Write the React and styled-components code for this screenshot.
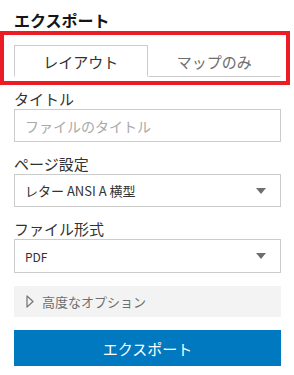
import React, { useState } from 'react';
import styled, { createGlobalStyle } from 'styled-components';

const GlobalStyle = createGlobalStyle`
  html, body {
    margin: 0;
    padding: 0;
    background: #fff;
  }
  body {
    font-family: "Noto Sans CJK JP", "Noto Sans", sans-serif;
    color: #323232;
  }
`;

const Panel = styled.div`
  width: 294px;
  height: 375px;
  box-sizing: border-box;
  padding: 10px 13px 0 14px;
  overflow: hidden;
`;

const Heading = styled.h2`
  margin: 0;
  font-size: 16px;
  line-height: 21px;
  font-weight: 700;
  color: #151515;
`;

const Highlight = styled.div`
  margin: 0 -9px 0 -14px;
  border: 4px solid #ec1c24;
  padding: 10px 5px 4px 10px;
`;

const TabList = styled.div`
  display: flex;
`;

const Tab = styled.button`
  flex: 1;
  height: 32px;
  margin: 0;
  padding: 0;
  background: #fff;
  font-family: inherit;
  font-size: 15px;
  color: ${(p) => (p.$active ? '#323232' : '#6e6e6e')};
  border: 1px solid ${(p) => (p.$active ? '#cccccc' : 'transparent')};
  border-bottom: ${(p) => (p.$active ? '1px solid transparent' : '1px solid #cccccc')};
  cursor: pointer;
`;

const Field = styled.label`
  display: block;
  margin-top: ${(p) => p.$gap}px;
`;

const LabelText = styled.span`
  display: block;
  font-size: 15px;
  line-height: 20px;
  color: #323232;
`;

const TextInput = styled.input`
  display: block;
  width: 100%;
  height: 33px;
  box-sizing: border-box;
  border: 1px solid #cccccc;
  padding: 0 10px;
  font-family: inherit;
  font-size: 14px;
  color: #323232;
  outline: none;
  &::placeholder {
    color: #a9a9a9;
  }
`;

const SelectBox = styled.div`
  display: flex;
  align-items: center;
  justify-content: space-between;
  height: ${(p) => p.$height}px;
  box-sizing: border-box;
  border: 1px solid #cccccc;
  padding: 0 14px 0 10px;
  font-size: ${(p) => p.$size}px;
  color: #323232;
  background: #fff;
`;

const Caret = styled.span`
  width: 0;
  height: 0;
  border-left: 5px solid transparent;
  border-right: 5px solid transparent;
  border-top: 6px solid #6e6e6e;
`;

const Advanced = styled.div`
  display: flex;
  align-items: center;
  gap: 8px;
  margin-top: 13px;
  height: 31px;
  padding-left: 12px;
  background: #f3f3f3;
  font-size: 13px;
  color: #6e6e6e;
`;

const ExportButton = styled.button`
  display: block;
  width: 100%;
  height: 36px;
  margin-top: 13px;
  border: none;
  background: #0079c1;
  color: #fff;
  font-family: inherit;
  font-size: 15px;
  cursor: pointer;
`;

const Select = ({ value, height, size }) => (
  <SelectBox $height={height} $size={size}>
    <span>{value}</span>
    <Caret />
  </SelectBox>
);

export default function App() {
  const [tab, setTab] = useState('layout');
  return (
    <>
      <GlobalStyle />
      <Panel>
        <Heading>エクスポート</Heading>
        <Highlight>
          <TabList>
            <Tab $active={tab === 'layout'} onClick={() => setTab('layout')}>
              レイアウト
            </Tab>
            <Tab $active={tab === 'map'} onClick={() => setTab('map')}>
              マップのみ
            </Tab>
          </TabList>
        </Highlight>
        <Field $gap={4}>
          <LabelText>タイトル</LabelText>
          <TextInput placeholder="ファイルのタイトル" />
        </Field>
        <Field $gap={12}>
          <LabelText>ページ設定</LabelText>
          <Select value="レター ANSI A 横型" height={33} size={13} />
        </Field>
        <Field $gap={12}>
          <LabelText>ファイル形式</LabelText>
          <Select value="PDF" height={34} size={12} />
        </Field>
        <Advanced>
          <svg width="8" height="13" viewBox="0 0 8 13">
            <path d="M1 1 L7 6.5 L1 12 Z" fill="none" stroke="#7a7a7a" strokeWidth="1.3" strokeLinejoin="round" />
          </svg>
          <span>高度なオプション</span>
        </Advanced>
        <ExportButton>エクスポート</ExportButton>
      </Panel>
    </>
  );
}
